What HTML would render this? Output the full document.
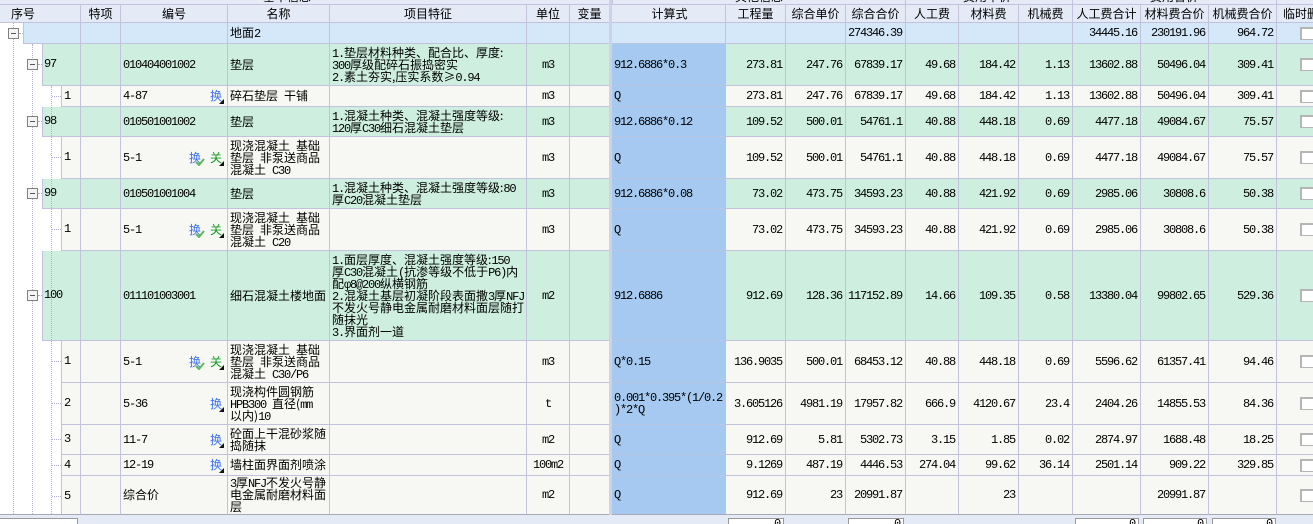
<!DOCTYPE html>
<html><head><meta charset="utf-8"><style>
html,body{margin:0;padding:0;width:1313px;height:524px;overflow:hidden;background:#e4eaf6}
body{position:relative;font:12px/12px "Liberation Mono",monospace;letter-spacing:-1.2px;color:#000}
b,.z{font:12px/12px "WenQuanYi Zen Hei","Noto Sans CJK SC",sans-serif;letter-spacing:0;font-weight:normal}
u{display:block;height:12px;line-height:12px;text-decoration:none}
table{position:absolute;left:0;top:5px;width:1314px;table-layout:fixed;border-collapse:separate;border-spacing:0}
td{box-sizing:border-box;border-right:1px solid #c2c2dc;border-bottom:1px solid #c2c2dc;padding:0 2px;white-space:nowrap;position:relative;overflow:visible;vertical-align:middle}
td.s{background:#cdd2e8;border:0;padding:0}
td.f{background:#a5c9f0;border-right:0;padding:0 0 0 2px;border-bottom-color:#b8c6e2}
td.r{text-align:right;padding-right:3px}
td.c{text-align:center}
tr.h td{background:#e4eaf6;text-align:center;padding-top:1px}
tr.h td.f{background:#e4eaf6;border-right:1px solid #c2c2dc;border-bottom-color:#c2c2dc}
tr.t td{background:#d5e8f9}
tr.g td{background:#ceefdf}
tr.w td{background:#f7f8f3}
tr.h td.s,tr.t td.s,tr.g td.s,tr.w td.s{background:#cdd2e8}
tr.g td.f,tr.w td.f{background:#a5c9f0}
tr.l td{border-bottom-color:#a9a9b5}
i{font-style:normal;display:inline-block;width:14px;height:13px;box-sizing:border-box;background:#fff;margin-left:21px;vertical-align:middle;border-style:solid;border-width:2px 1px 1px 2px;border-color:#b5b5b5}
.x{position:absolute;right:5px;top:calc(50% - 7px);font:12px/13px "WenQuanYi Zen Hei","Noto Sans CJK SC",sans-serif;letter-spacing:0}
.bl{color:#3a70f2}.gr{color:#109a20}
.x2{right:26px}
.tri{position:absolute;right:3px;top:calc(50% + 3px);width:0;height:0;border-left:5px solid transparent;border-bottom:5px solid #111}
.ck{position:absolute;right:22px;top:50%}
.o{position:absolute;background:#fff}
.ol{position:absolute;width:1px;background:#c2c2dc}
.v{position:absolute;width:0;border-left:1px dotted #b0b0cc}
.hz{position:absolute;height:0;border-top:1px dotted #b0b0cc}
.m{position:absolute;width:11px;height:11px;box-sizing:border-box;border:1px solid #808080;background:#f4f4f4}
.m:after{content:"";position:absolute;left:2px;right:2px;top:4px;height:1px;background:#555}
.q{position:absolute;background:#e4eaf6}
.n{position:absolute}
.bx{position:absolute;top:518px;height:10px;box-sizing:border-box;background:#fff;border:1px solid #999;text-align:right;padding:0 3px;overflow:hidden;line-height:11px;font-size:12px}
.ln{position:absolute;top:0;width:1px;height:5px;background:#c2c2dc}
</style></head><body>
<div class="q" style="left:0;top:0;width:1313px;height:4px"></div>
<div class="q" style="left:0;top:4px;width:1313px;height:1px;background:#c2c2dc"></div>
<div class="n z" style="left:263px;top:-9px">基本信息</div>
<div class="n z" style="left:735px;top:-9px">其他信息</div>
<div class="n z" style="left:963px;top:-9px">费用单价</div>
<div class="n z" style="left:1150px;top:-9px">费用合价</div>
<div class="ln" style="left:612px"></div><div class="ln" style="left:905px"></div><div class="ln" style="left:1072px"></div><div class="ln" style="left:1276px"></div>
<div class="ln" style="left:609px;width:3px;background:#cdd2e8"></div>
<table>
<colgroup><col style="width:81px"><col style="width:40px"><col style="width:107px"><col style="width:102px"><col style="width:197px"><col style="width:43px"><col style="width:39px"><col style="width:3px"><col style="width:114px"><col style="width:60px"><col style="width:60px"><col style="width:60px"><col style="width:53px"><col style="width:60px"><col style="width:54px"><col style="width:68px"><col style="width:68px"><col style="width:68px"><col style="width:37px"></colgroup>
<tr class="h" style="height:18px"><td style="text-align:left;padding-left:11px"><u><b>序号</b></u></td><td><u><b>特项</b></u></td><td><u><b>编号</b></u></td><td><u><b>名称</b></u></td><td><u><b>项目特征</b></u></td><td><u><b>单位</b></u></td><td style="border-right:0"><u><b>变量</b></u></td><td class="s"></td><td class="f"><u><b>计算式</b></u></td><td><u><b>工程量</b></u></td><td><u><b>综合单价</b></u></td><td><u><b>综合合价</b></u></td><td><u><b>人工费</b></u></td><td><u><b>材料费</b></u></td><td><u><b>机械费</b></u></td><td style="padding-left:0;padding-right:0"><u><b>人工费合计</b></u></td><td style="padding-left:0;padding-right:0"><u><b>材料费合价</b></u></td><td style="padding-left:0;padding-right:0"><u><b>机械费合价</b></u></td><td style="text-align:left;padding-left:6px;padding-right:0;overflow:hidden"><u><b>临时删除</b></u></td></tr>
<tr class="t" style="height:21px"><td></td><td></td><td></td><td><u><b>地面</b>2</u></td><td></td><td></td><td style="border-right:0"></td><td class="s"></td><td class="f" style="background:#d5e8f9;border-right:1px solid #c2c2dc"></td><td></td><td></td><td class="r">274346.39</td><td></td><td></td><td></td><td class="r">34445.16</td><td class="r">230191.96</td><td class="r">964.72</td><td><i></i></td></tr>
<tr class="g" style="height:42px"><td></td><td></td><td>010404001002</td><td><u><b>垫层</b></u></td><td><u>1.<b>垫层材料种类、配合比、厚度:</b></u><u>300<b>厚级配碎石振捣密实</b></u><u>2.<b>素土夯实,压实系数≥</b>0.94</u></td><td class="c">m3</td><td style="border-right:0"></td><td class="s"></td><td class="f">912.6886*0.3</td><td class="r">273.81</td><td class="r">247.76</td><td class="r">67839.17</td><td class="r">49.68</td><td class="r">184.42</td><td class="r">1.13</td><td class="r">13602.88</td><td class="r">50496.04</td><td class="r">309.41</td><td><i></i></td></tr>
<tr class="w" style="height:21px"><td></td><td></td><td>4-87<span class="x bl">换</span><span class="tri"></span></td><td><u><b>碎石垫层</b> <b>干铺</b></u></td><td></td><td class="c">m3</td><td style="border-right:0"></td><td class="s"></td><td class="f">Q</td><td class="r">273.81</td><td class="r">247.76</td><td class="r">67839.17</td><td class="r">49.68</td><td class="r">184.42</td><td class="r">1.13</td><td class="r">13602.88</td><td class="r">50496.04</td><td class="r">309.41</td><td><i></i></td></tr>
<tr class="g" style="height:30px"><td></td><td></td><td>010501001002</td><td><u><b>垫层</b></u></td><td><u>1.<b>混凝土种类、混凝土强度等级:</b></u><u>120<b>厚</b>C30<b>细石混凝土垫层</b></u></td><td class="c">m3</td><td style="border-right:0"></td><td class="s"></td><td class="f">912.6886*0.12</td><td class="r">109.52</td><td class="r">500.01</td><td class="r">54761.1</td><td class="r">40.88</td><td class="r">448.18</td><td class="r">0.69</td><td class="r">4477.18</td><td class="r">49084.67</td><td class="r">75.57</td><td><i></i></td></tr>
<tr class="w" style="height:42px"><td></td><td></td><td>5-1<span class="x x2 bl">换</span><svg class="ck" width="10" height="8" viewBox="0 0 10 8"><path d="M1 4 L4 7 L9 1" fill="none" stroke="#5cb85c" stroke-width="2"/></svg><span class="x gr">关</span><span class="tri"></span></td><td><u><b>现浇混凝土</b> <b>基础</b></u><u><b>垫层</b> <b>非泵送商品</b></u><u><b>混凝土</b> C30</u></td><td></td><td class="c">m3</td><td style="border-right:0"></td><td class="s"></td><td class="f">Q</td><td class="r">109.52</td><td class="r">500.01</td><td class="r">54761.1</td><td class="r">40.88</td><td class="r">448.18</td><td class="r">0.69</td><td class="r">4477.18</td><td class="r">49084.67</td><td class="r">75.57</td><td><i></i></td></tr>
<tr class="g" style="height:30px"><td></td><td></td><td>010501001004</td><td><u><b>垫层</b></u></td><td><u>1.<b>混凝土种类、混凝土强度等级:</b>80</u><u><b>厚</b>C20<b>混凝土垫层</b></u></td><td class="c">m3</td><td style="border-right:0"></td><td class="s"></td><td class="f">912.6886*0.08</td><td class="r">73.02</td><td class="r">473.75</td><td class="r">34593.23</td><td class="r">40.88</td><td class="r">421.92</td><td class="r">0.69</td><td class="r">2985.06</td><td class="r">30808.6</td><td class="r">50.38</td><td><i></i></td></tr>
<tr class="w" style="height:42px"><td></td><td></td><td>5-1<span class="x x2 bl">换</span><svg class="ck" width="10" height="8" viewBox="0 0 10 8"><path d="M1 4 L4 7 L9 1" fill="none" stroke="#5cb85c" stroke-width="2"/></svg><span class="x gr">关</span><span class="tri"></span></td><td><u><b>现浇混凝土</b> <b>基础</b></u><u><b>垫层</b> <b>非泵送商品</b></u><u><b>混凝土</b> C20</u></td><td></td><td class="c">m3</td><td style="border-right:0"></td><td class="s"></td><td class="f">Q</td><td class="r">73.02</td><td class="r">473.75</td><td class="r">34593.23</td><td class="r">40.88</td><td class="r">421.92</td><td class="r">0.69</td><td class="r">2985.06</td><td class="r">30808.6</td><td class="r">50.38</td><td><i></i></td></tr>
<tr class="g" style="height:90px"><td></td><td></td><td>011101003001</td><td><u><b>细石混凝土楼地面</b></u></td><td><u>1.<b>面层厚度、混凝土强度等级:</b>150</u><u><b>厚</b>C30<b>混凝土</b>(<b>抗渗等级不低于</b>P6)<b>内</b></u><u><b>配</b>φ8@200<b>纵横钢筋</b></u><u>2.<b>混凝土基层初凝阶段表面撒</b>3<b>厚</b>NFJ</u><u><b>不发火号静电金属耐磨材料面层随打</b></u><u><b>随抹光</b></u><u>3.<b>界面剂一道</b></u></td><td class="c">m2</td><td style="border-right:0"></td><td class="s"></td><td class="f">912.6886</td><td class="r">912.69</td><td class="r">128.36</td><td class="r">117152.89</td><td class="r">14.66</td><td class="r">109.35</td><td class="r">0.58</td><td class="r">13380.04</td><td class="r">99802.65</td><td class="r">529.36</td><td><i></i></td></tr>
<tr class="w" style="height:42px"><td></td><td></td><td>5-1<span class="x x2 bl">换</span><svg class="ck" width="10" height="8" viewBox="0 0 10 8"><path d="M1 4 L4 7 L9 1" fill="none" stroke="#5cb85c" stroke-width="2"/></svg><span class="x gr">关</span><span class="tri"></span></td><td><u><b>现浇混凝土</b> <b>基础</b></u><u><b>垫层</b> <b>非泵送商品</b></u><u><b>混凝土</b> C30/P6</u></td><td></td><td class="c">m3</td><td style="border-right:0"></td><td class="s"></td><td class="f">Q*0.15</td><td class="r">136.9035</td><td class="r">500.01</td><td class="r">68453.12</td><td class="r">40.88</td><td class="r">448.18</td><td class="r">0.69</td><td class="r">5596.62</td><td class="r">61357.41</td><td class="r">94.46</td><td><i></i></td></tr>
<tr class="w" style="height:42px"><td></td><td></td><td>5-36<span class="x bl">换</span><span class="tri"></span></td><td><u><b>现浇构件圆钢筋</b></u><u>HPB300 <b>直径(</b>mm</u><u><b>以内)</b>10</u></td><td></td><td class="c">t</td><td style="border-right:0"></td><td class="s"></td><td class="f"><u>0.001*0.395*(1/0.2</u><u>)*2*Q</u></td><td class="r">3.605126</td><td class="r">4981.19</td><td class="r">17957.82</td><td class="r">666.9</td><td class="r">4120.67</td><td class="r">23.4</td><td class="r">2404.26</td><td class="r">14855.53</td><td class="r">84.36</td><td><i></i></td></tr>
<tr class="w" style="height:30px"><td></td><td></td><td>11-7<span class="x bl">换</span><span class="tri"></span></td><td><u><b>砼面上干混砂浆随</b></u><u><b>捣随抹</b></u></td><td></td><td class="c">m2</td><td style="border-right:0"></td><td class="s"></td><td class="f">Q</td><td class="r">912.69</td><td class="r">5.81</td><td class="r">5302.73</td><td class="r">3.15</td><td class="r">1.85</td><td class="r">0.02</td><td class="r">2874.97</td><td class="r">1688.48</td><td class="r">18.25</td><td><i></i></td></tr>
<tr class="w" style="height:21px"><td></td><td></td><td>12-19<span class="x bl">换</span><span class="tri"></span></td><td><u><b>墙柱面界面剂喷涂</b></u></td><td></td><td class="c">100m2</td><td style="border-right:0"></td><td class="s"></td><td class="f">Q</td><td class="r">9.1269</td><td class="r">487.19</td><td class="r">4446.53</td><td class="r">274.04</td><td class="r">99.62</td><td class="r">36.14</td><td class="r">2501.14</td><td class="r">909.22</td><td class="r">329.85</td><td><i></i></td></tr>
<tr class="w l" style="height:39px"><td></td><td></td><td><u><b>综合价</b></u></td><td><u>3<b>厚</b>NFJ<b>不发火号静</b></u><u><b>电金属耐磨材料面</b></u><u><b>层</b></u></td><td></td><td class="c">m2</td><td style="border-right:0"></td><td class="s"></td><td class="f">Q</td><td class="r">912.69</td><td class="r">23</td><td class="r">20991.87</td><td></td><td class="r">23</td><td></td><td></td><td class="r">20991.87</td><td></td><td><i></i></td></tr>
</table>
<div class="o" style="left:0;top:23px;width:23px;height:21px"></div>
<div class="o" style="left:0;top:44px;width:42px;height:42px"></div>
<div class="o" style="left:0;top:86px;width:61px;height:21px"></div>
<div class="o" style="left:0;top:107px;width:42px;height:30px"></div>
<div class="o" style="left:0;top:137px;width:61px;height:42px"></div>
<div class="o" style="left:0;top:179px;width:42px;height:30px"></div>
<div class="o" style="left:0;top:209px;width:61px;height:42px"></div>
<div class="o" style="left:0;top:251px;width:42px;height:90px"></div>
<div class="o" style="left:0;top:341px;width:61px;height:173px"></div>
<div class="ol" style="left:23px;top:23px;height:21px"></div>
<div class="ol" style="left:42px;top:44px;height:42px"></div>
<div class="ol" style="left:42px;top:107px;height:30px"></div>
<div class="ol" style="left:42px;top:179px;height:30px"></div>
<div class="ol" style="left:42px;top:251px;height:90px"></div>
<div class="ol" style="left:61px;top:86px;height:21px"></div>
<div class="ol" style="left:61px;top:137px;height:42px"></div>
<div class="ol" style="left:61px;top:209px;height:42px"></div>
<div class="ol" style="left:61px;top:341px;height:173px"></div>
<div class="v" style="left:13px;top:23px;height:491px"></div>
<div class="v" style="left:32px;top:44px;height:470px"></div>
<div class="v" style="left:51px;top:86px;height:428px"></div>
<div class="hz" style="left:19px;top:33px;width:4px"></div>
<div class="hz" style="left:38px;top:64px;width:4px"></div>
<div class="hz" style="left:38px;top:121px;width:4px"></div>
<div class="hz" style="left:38px;top:193px;width:4px"></div>
<div class="hz" style="left:38px;top:295px;width:4px"></div>
<div class="hz" style="left:52px;top:96px;width:9px"></div>
<div class="hz" style="left:52px;top:157px;width:9px"></div>
<div class="hz" style="left:52px;top:229px;width:9px"></div>
<div class="hz" style="left:52px;top:361px;width:9px"></div>
<div class="hz" style="left:52px;top:403px;width:9px"></div>
<div class="hz" style="left:52px;top:439px;width:9px"></div>
<div class="hz" style="left:52px;top:465px;width:9px"></div>
<div class="hz" style="left:52px;top:496px;width:9px"></div>
<div class="m" style="left:8px;top:28px"></div>
<div class="m" style="left:27px;top:59px"></div>
<div class="m" style="left:27px;top:116px"></div>
<div class="m" style="left:27px;top:188px"></div>
<div class="m" style="left:27px;top:290px"></div>
<div class="n" style="left:44px;top:58px">97</div>
<div class="n" style="left:44px;top:115px">98</div>
<div class="n" style="left:44px;top:187px">99</div>
<div class="n" style="left:44px;top:289px">100</div>
<div class="n" style="left:64px;top:90px">1</div>
<div class="n" style="left:64px;top:151px">1</div>
<div class="n" style="left:64px;top:223px">1</div>
<div class="n" style="left:64px;top:355px">1</div>
<div class="n" style="left:64px;top:397px">2</div>
<div class="n" style="left:64px;top:433px">3</div>
<div class="n" style="left:64px;top:459px">4</div>
<div class="n" style="left:64px;top:490px">5</div>
<div class="bx" style="left:-1px;width:79px"></div>
<div class="bx" style="left:728px;width:56px">0</div>
<div class="bx" style="left:848px;width:56px">0</div>
<div class="bx" style="left:1075px;width:64px">0</div>
<div class="bx" style="left:1143px;width:64px">0</div>
<div class="bx" style="left:1212px;width:64px">0</div>
</body></html>
